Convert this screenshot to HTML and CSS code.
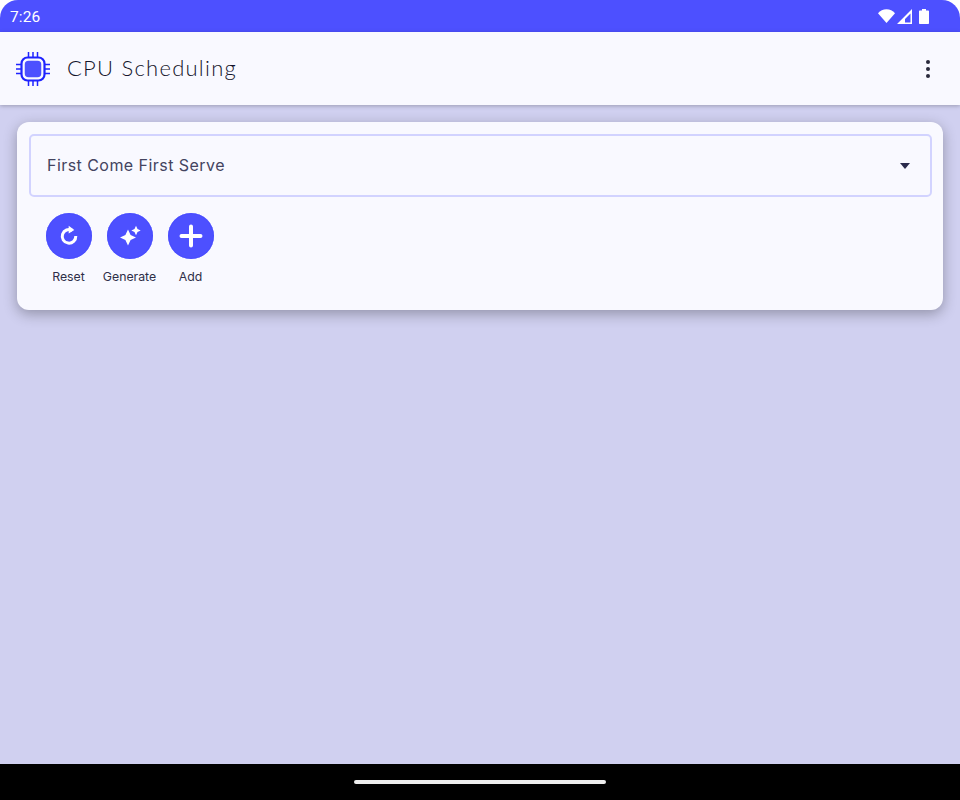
FILE: index.html
```html
<!DOCTYPE html>
<html lang="en">
<head>
  <meta charset="UTF-8">
  <title>CPU Scheduling</title>
  <meta name="viewport" content="width=device-width, initial-scale=1.0">
  <link rel="stylesheet" href="styles.css">
</head>
<body>
<div class="screen">
  <div class="status-bar">
    <span class="clock">7:26</span>
    <div class="status-icons">
      <svg class="wifi" width="17" height="14" viewBox="0 0 17 14"><path d="M8.500 14 0 4.300C2.200 1.800 5.200 0.300 8.500 0.300s6.300 1.500 8.500 4z" fill="#fff"/></svg>
      <svg class="signal" width="15" height="15" viewBox="0 0 15 15"><path d="M15 0V15H0zM13.500 4.500 8 10V13.500H13.500z" fill="#fff" fill-rule="evenodd"/></svg>
      <svg class="battery" width="10" height="15" viewBox="0 0 10 15"><path d="M3 0h4v1.400h2c.6 0 1 .4 1 1V14c0 .6-.4 1-1 1H1c-.6 0-1-.4-1-1V2.400c0-.6.4-1 1-1h2z" fill="#fff"/></svg>
    </div>
  </div>

  <header class="app-bar">
    <svg class="logo" width="36" height="36" viewBox="0 0 36 36" fill="none" stroke="#1f23ff" stroke-width="1.500">
      <rect x="6.500" y="6.500" width="23" height="23" rx="6" stroke-width="2.200"/>
      <rect x="10.500" y="10.500" width="15" height="15" rx="3" fill="#4d50ff" stroke="#4d50ff"/>
      <path d="M13.500 1v5M18 1v5M22.500 1v5M13.500 30v5M18 30v5M22.500 30v5M1 13.500h5M1 18h5M1 22.500h5M30 13.500h5M30 18h5M30 22.500h5"/>
    </svg>
    <h1>CPU Scheduling</h1>
    <div class="more-menu"><span></span><span></span><span></span></div>
  </header>

  <main class="content">
    <section class="card">
      <div class="select-box">
        <span>First Come First Serve</span>
        <div class="arrow"></div>
      </div>
      <div class="actions">
        <div class="action">
          <div class="round-btn">
            <svg width="24" height="24" viewBox="0 0 24 24" fill="none">
              <path d="M15.300 6.400A6.800 6.800 0 1 0 18.800 12" stroke="#fff" stroke-width="3"/>
              <path d="M11.700 1.800 17.300 5.900 11.700 9.600z" fill="#fff"/>
            </svg>
          </div>
          <span>Reset</span>
        </div>
        <div class="action">
          <div class="round-btn">
            <svg width="26" height="26" viewBox="0 0 26 26" fill="#fff">
              <path d="M11 6.500 13.600 11.900 19 14.500 13.600 17.100 11 22.500 8.400 17.100 3 14.500 8.400 11.900z"/>
              <path d="M19 2.800 20.500 6 23.700 7.500 20.500 9 19 12.200 17.500 9 14.300 7.500 17.500 6z"/>
            </svg>
          </div>
          <span>Generate</span>
        </div>
        <div class="action">
          <div class="round-btn">
            <svg width="26" height="26" viewBox="0 0 26 26"><path d="M13 3.500v19M3.500 13h19" stroke="#fff" stroke-width="4" stroke-linecap="round"/></svg>
          </div>
          <span>Add</span>
        </div>
      </div>
    </section>
  </main>

  <div class="nav-bar"><div class="home-pill"></div></div>
</div>
</body>
</html>
```

FILE: styles.css
```css
html, body {
  margin: 0;
  background-color: #fff;
}
.screen {
  width: 960px;
  height: 800px;
  display: flex;
  flex-direction: column;
  overflow: hidden;
  font-family: Inter, "Liberation Sans", sans-serif;
}
.status-bar {
  height: 32px;
  flex: none;
  display: flex;
  align-items: center;
  justify-content: space-between;
  padding: 0 31px 0 10px;
  background-color: #4d50ff;
  border-radius: 18px 18px 0 0;
  color: #fff;
  box-sizing: border-box;
}
.clock {
  font-family: Roboto, sans-serif;
  font-size: 15.5px;
  letter-spacing: 0.1px;
  margin-top: 1px;
}
.status-icons {
  display: flex;
  align-items: center;
}
.signal {
  margin-left: 2px;
}
.battery {
  margin-left: 7px;
}
.app-bar {
  height: 73px;
  flex: none;
  display: flex;
  align-items: center;
  padding: 0 0 0 15px;
  background-color: #f9f9ff;
  box-shadow: 0 1px 4px rgba(0,0,0,0.25);
  position: relative;
  box-sizing: border-box;
}
.logo {
  flex: none;
}
.app-bar h1 {
  margin: 0 0 2px 16px;
  flex: 1;
  font-family: Lato, sans-serif;
  font-weight: 300;
  font-size: 22px;
  letter-spacing: 1.25px;
  color: #14142a;
}
.more-menu {
  width: 64px;
  display: flex;
  flex-direction: column;
  align-items: center;
  gap: 3px;
}
.more-menu span {
  width: 4px;
  height: 4px;
  border-radius: 50%;
  background-color: #2a2a3c;
}
.content {
  flex: 1;
  padding: 17px 17px 0;
  background-color: #d0d0f0;
}
.card {
  height: 188px;
  padding: 12px 11.5px;
  box-sizing: border-box;
  background-color: #f9f9ff;
  border-radius: 12px;
  box-shadow: 0 4px 14px rgba(0,0,0,0.3);
}
.select-box {
  height: 63px;
  display: flex;
  align-items: center;
  justify-content: space-between;
  padding: 0 20px 2px 16.5px;
  box-sizing: border-box;
  border: 2px solid #d2d3ff;
  border-radius: 5px;
  font-size: 16px;
  letter-spacing: 0.45px;
  color: #44445f;
}
.arrow {
  width: 0;
  height: 0;
  margin-top: 2px;
  border-left: 5.5px solid transparent;
  border-right: 5.5px solid transparent;
  border-top: 6px solid #2a2a4c;
}
.actions {
  display: flex;
  padding: 16px 0 0 9.5px;
}
.action {
  width: 61px;
  display: flex;
  flex-direction: column;
  align-items: center;
  font-size: 12.3px;
  color: #2e2e48;
}
.action span {
  margin-top: 10px;
  white-space: nowrap;
}
.round-btn {
  width: 46px;
  height: 46px;
  display: flex;
  align-items: center;
  justify-content: center;
  border-radius: 50%;
  background-color: #4d50ff;
  box-shadow: inset 0 0 1px #1f23ff;
}
.nav-bar {
  height: 36px;
  flex: none;
  display: flex;
  align-items: center;
  justify-content: center;
  background-color: #000;
}
.home-pill {
  width: 252px;
  height: 4px;
  border-radius: 2px;
  background-color: #eee;
}
```
